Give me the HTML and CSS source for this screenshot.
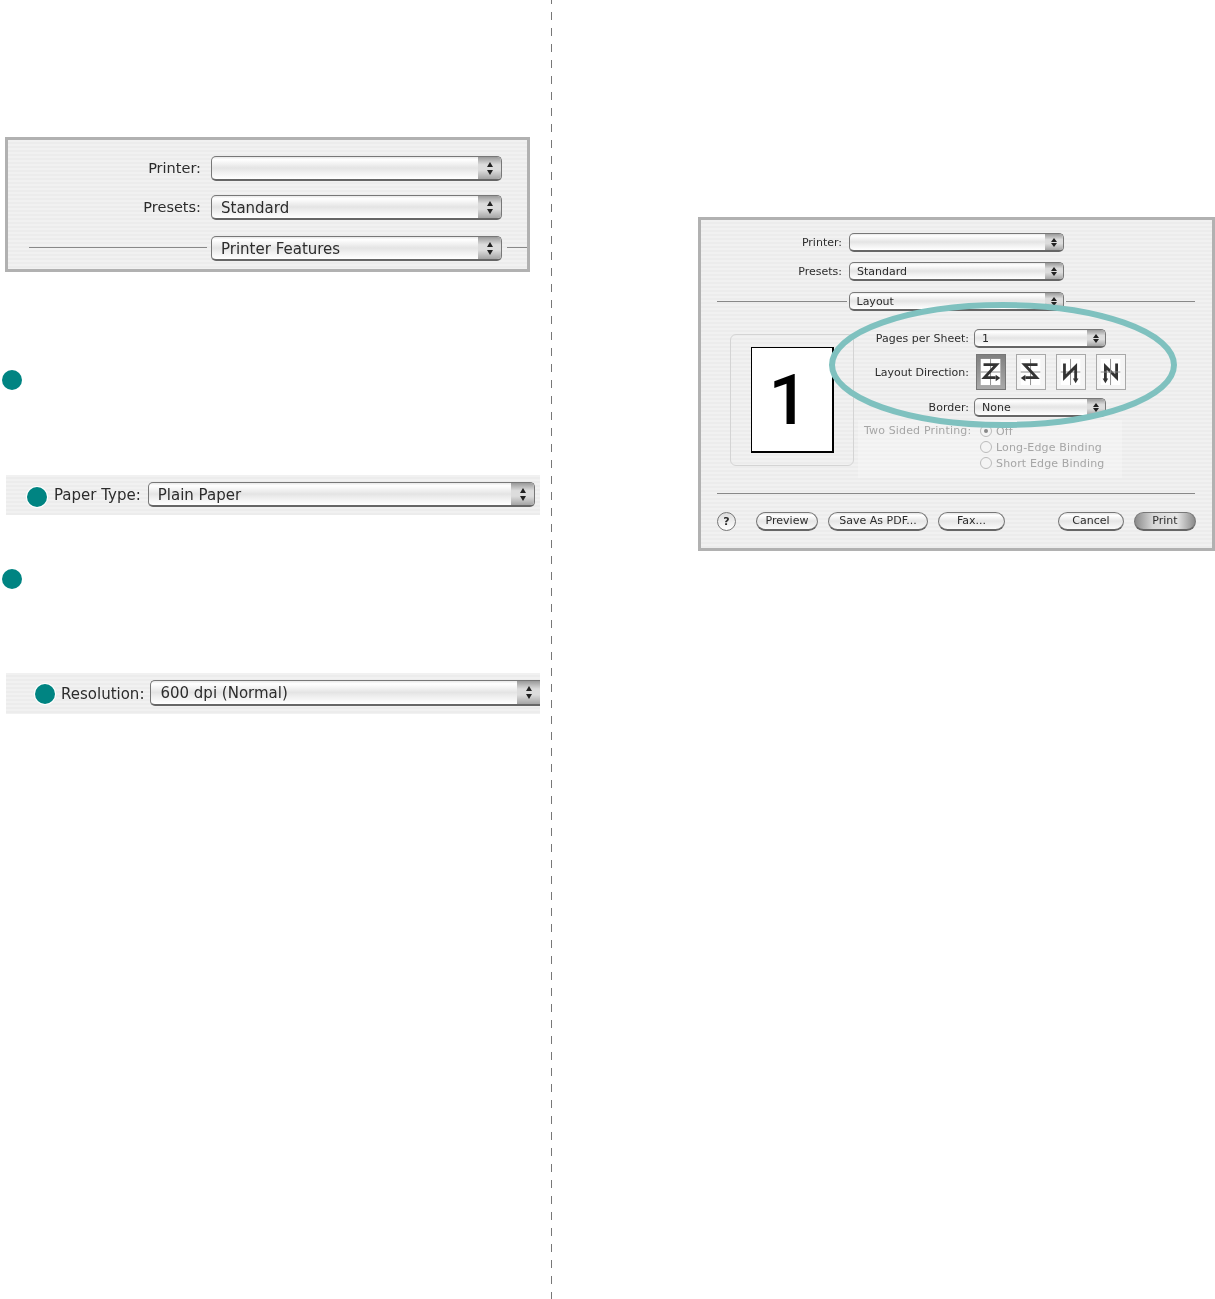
FILE: index.html
```html
<!DOCTYPE html>
<html>

<head>
    <meta charset="utf-8">
    <title>Printer settings</title>
    <link rel="stylesheet" href="styles.css">
</head>

<body>

<div class="page">

    <div class="col_left">
        <div class="panel">
            <div class="panel_row">
                <span class="panel_label">Printer:</span>
                <div class="select big"><span></span><i class="stepper"></i></div>
            </div>
            <div class="panel_row">
                <span class="panel_label">Presets:</span>
                <div class="select big"><span>Standard</span><i class="stepper"></i></div>
            </div>
            <div class="panel_row sep_row">
                <div class="line line_a"></div>
                <div class="select big"><span>Printer Features</span><i class="stepper"></i></div>
                <div class="line line_b"></div>
            </div>
        </div>

        <div class="bullet step_one"></div>

        <div class="strip paper">
            <div class="bullet ringed"></div>
            <span class="strip_label">Paper Type:</span>
            <div class="select big"><span>Plain Paper</span><i class="stepper"></i></div>
        </div>

        <div class="bullet step_two"></div>

        <div class="strip resolution">
            <div class="bullet ringed"></div>
            <span class="strip_label">Resolution:</span>
            <div class="select big"><span>600 dpi (Normal)</span><i class="stepper"></i></div>
        </div>
    </div>

    <div class="col_right">
        <div class="dialog">
            <div class="d_row">
                <span class="d_label">Printer:</span>
                <div class="select small main_sel"><span></span><i class="stepper"></i></div>
            </div>
            <div class="d_row">
                <span class="d_label">Presets:</span>
                <div class="select small main_sel"><span>Standard</span><i class="stepper"></i></div>
            </div>
            <div class="d_row sep">
                <div class="line"></div>
                <div class="select small main_sel"><span>Layout</span><i class="stepper"></i></div>
                <div class="line"></div>
            </div>

            <div class="content">
                <div class="preview">
                    <div class="sheet">1</div>
                </div>
                <div class="options">
                    <div class="opt_row">
                        <span class="opt_label">Pages per Sheet:</span>
                        <div class="select small opt_sel"><span>1</span><i class="stepper"></i></div>
                    </div>
                    <div class="opt_row dir_row">
                        <span class="opt_label">Layout Direction:</span>
                        <div class="dir_btns">
                            <svg class="dir on" viewBox="0 0 30 36" width="30" height="36">
                                <rect x="4" y="4" width="21" height="28" fill="#fff"/>
                                <path d="M14.5 4V32M4 18H25" stroke="#888" stroke-width="1"/>
                                <path d="M7 10H21L8 24H20" fill="none" stroke="#333" stroke-width="3"/>
                                <path d="M20 21L25 24.500L20 28Z" fill="#333"/>
                            </svg>
                            <svg class="dir" viewBox="0 0 30 36" width="30" height="36">
                                <rect x="4" y="4" width="21" height="28" fill="#fff"/>
                                <path d="M14.500 4V32M4 18H25" stroke="#888" stroke-width="1"/>
                                <path d="M22 10H8L21 24H9" fill="none" stroke="#333" stroke-width="3"/>
                                <path d="M9 21L4 24.500L9 28Z" fill="#333"/>
                            </svg>
                            <svg class="dir" viewBox="0 0 30 36" width="30" height="36">
                                <rect x="4" y="4" width="21" height="28" fill="#fff"/>
                                <path d="M14.500 4V32M4 18H25" stroke="#888" stroke-width="1"/>
                                <path d="M8 9V24L20 12V26" fill="none" stroke="#333" stroke-width="3"/>
                                <path d="M17 25L20 30L23 25Z" fill="#333"/>
                            </svg>
                            <svg class="dir" viewBox="0 0 30 36" width="30" height="36">
                                <rect x="4" y="4" width="21" height="28" fill="#fff"/>
                                <path d="M21 9V24L9 12V26" fill="none" stroke="#333" stroke-width="3"/>
                                <path d="M14.500 4V32M4 18H25" stroke="#888" stroke-width="1"/>
                                <path d="M6 25L9 30L12 25Z" fill="#333"/>
                            </svg>
                        </div>
                    </div>
                    <div class="opt_row border_row">
                        <span class="opt_label">Border:</span>
                        <div class="select small opt_sel"><span>None</span><i class="stepper"></i></div>
                    </div>
                    <div class="two_sided">
                        <span class="two_label">Two Sided Printing:</span>
                        <div class="radios">
                            <div class="radio picked"><i></i>Off</div>
                            <div class="radio"><i></i>Long-Edge Binding</div>
                            <div class="radio"><i></i>Short Edge Binding</div>
                        </div>
                    </div>
                </div>
            </div>

            <div class="line wide"></div>

            <div class="footer">
                <div class="help">?</div>
                <div class="btn b_preview">Preview</div>
                <div class="btn b_pdf">Save As PDF...</div>
                <div class="btn b_fax">Fax...</div>
                <div class="btn b_cancel">Cancel</div>
                <div class="btn b_print">Print</div>
            </div>

            <!-- callout ring drawn over the layout options -->
            <svg class="ring" width="356" height="133" viewBox="0 0 356 133">
                <ellipse cx="177" cy="66" rx="171" ry="60" fill="none" stroke="#7fc1bf" stroke-width="6"/>
            </svg>
        </div>
    </div>

</div>

</body>

</html>
```

FILE: styles.css
```css
* {
    margin: 0;
    box-sizing: border-box;
}

body {
    background: #fff;
    font-family: "DejaVu Sans", sans-serif;
    color: #2c2c2c;
}

.page {
    display: flex;
    height: 1299px;
    overflow: hidden;
}

/* long dashes of the page fold */
.col_left {
    width: 552px;
    padding-top: 137px;
    background: linear-gradient(to bottom, #777 0, #777 8px, transparent 8px) right -1px top 12px / 2px 16px repeat-y;
}

.col_right {
    flex: 1;
    padding-top: 217px;
}

/* stripes shared by the dialogs */
.panel, .strip, .dialog {
    background: repeating-linear-gradient(to bottom, #f1f1f1 0, #f1f1f1 2px, #ececec 2px, #ececec 4px);
}

.panel {
    width: 525px;
    height: 135px;
    margin-left: 5px;
    border: 3px solid #b1b1b1;
    padding-top: 16px;
    filter: blur(0.4px);
}

.panel_row {
    display: flex;
    align-items: center;
    margin-bottom: 14px;
}

.panel_label {
    width: 193px;
    margin: -2px 10px 0 0;
    text-align: right;
    font-size: 14.500px;
}

.sep_row {
    margin-top: 16px;
}

.sep_row .line_a {
    flex: none;
    width: 178px;
    margin: -2px 4px 0 21px;
}

.sep_row .line_b {
    flex: none;
    width: 20px;
    margin: -2px 0 0 5px;
}

.panel .select {
    width: 291px;
}

.line {
    height: 1px;
    background: #888;
    flex: 1;
}

/* select control */
.select {
    display: flex;
    justify-content: space-between;
    border: 1px solid #777;
    border-bottom: 2px solid #666;
    border-radius: 5px;
    background: linear-gradient(to bottom, #e8e8e8 0, #fff 12%, #e4e4e4 50%, #f0f0f0 70%, #fff 100%);
    overflow: hidden;
    color: #2c2c2c;
}

.select.big {
    height: 25px;
    font-size: 15px;
    line-height: 24px;
}

.select.big span {
    padding-left: 9px;
}

.select.small {
    height: 19px;
    font-size: 11px;
    line-height: 17px;
}

.select.small span {
    padding-left: 7px;
}

.stepper {
    display: flex;
    flex-direction: column;
    align-items: center;
    justify-content: center;
    gap: 3px;
    width: 23px;
    background: linear-gradient(to bottom, #9a9a9a 0, #dcdcdc 35%, #dcdcdc 60%, #a5a5a5 100%);
}

.small .stepper {
    width: 18px;
    gap: 1px;
}

.stepper::before, .stepper::after {
    content: "";
    border-left: 3px solid transparent;
    border-right: 3px solid transparent;
}

.stepper::before {
    border-bottom: 5px solid #222;
}

.stepper::after {
    border-top: 5px solid #222;
}

.small .stepper::before {
    border-bottom-width: 4px;
}

.small .stepper::after {
    border-top-width: 4px;
}

/* teal bullets */
.bullet {
    width: 20px;
    height: 20px;
    border-radius: 50%;
    background: #008482;
}

.step_one {
    margin: 98px 0 0 2px;
}

.step_two {
    margin: 54px 0 0 2px;
}

.ringed {
    box-shadow: 0 0 0 1px #fff;
}

.strip {
    display: flex;
    align-items: center;
    width: 534px;
    margin-left: 6px;
    filter: blur(0.4px);
}

.paper {
    height: 40px;
    margin-top: 85px;
    padding: 0 5px 0 21px;
}

.paper .bullet {
    margin-top: 4px;
}

.resolution {
    height: 41px;
    margin-top: 84px;
    padding-left: 29px;
}

.strip_label {
    margin: 0 6px 0 7px;
    font-size: 15px;
    white-space: nowrap;
}

.paper .strip_label {
    margin-right: 7px;
}

.resolution .strip_label {
    margin-left: 6px;
}

.strip .select {
    flex: 1;
    margin-top: -1px;
}

.resolution .select {
    height: 26px;
    border-right: none;
    border-radius: 5px 0 0 5px;
}

/* right hand dialog */
.dialog {
    position: relative;
    width: 517px;
    height: 334px;
    margin-left: 146px;
    border: 3px solid #b1b1b1;
    padding: 13px 17px 0 16px;
    filter: blur(0.3px);
}

.d_row {
    display: flex;
    align-items: center;
    margin-bottom: 10px;
}

.d_label {
    width: 125px;
    margin-right: 7px;
    text-align: right;
    font-size: 11px;
}

.main_sel {
    width: 215px;
}

.d_row.sep {
    margin-top: 11px;
    gap: 2px;
}

.d_row.sep .line {
    margin-top: -1px;
}

.content {
    display: flex;
    align-items: flex-start;
    margin-top: 18px;
}

.preview {
    width: 124px;
    height: 132px;
    margin: 5px 0 0 13px;
    padding: 12px 0 0 20px;
    border: 1px solid #d4d4d4;
    border-radius: 6px;
}

.sheet {
    width: 83px;
    height: 106px;
    padding-right: 7px;
    background: #fff;
    border: 1px solid #000;
    border-bottom-width: 2px;
    border-right-width: 2px;
    text-align: center;
    font-family: Roboto, sans-serif;
    font-size: 70px;
    font-weight: 500;
    line-height: 104px;
    color: #000;
}

.opt_row {
    display: flex;
    align-items: center;
    font-size: 11px;
}

.opt_label {
    width: 115px;
    margin-right: 5px;
    text-align: right;
    white-space: nowrap;
}

.opt_sel {
    width: 132px;
}

.dir_row {
    margin-top: 6px;
}

.dir_row .opt_label {
    margin-right: 7px;
}

.dir_btns {
    display: flex;
    gap: 10px;
}

.dir {
    display: block;
    background: #f4f4f4;
    border: 1px solid #a8a8a8;
}

.dir.on {
    background: linear-gradient(to bottom, #808080, #aaa);
    border-color: #777;
}

.border_row {
    margin-top: 8px;
}

.two_sided {
    display: flex;
    align-items: flex-start;
    width: 264px;
    height: 58px;
    margin: 3px 0 0 4px;
    padding-top: 3px;
    background: rgba(255, 255, 255, 0.25);
    font-size: 11px;
    letter-spacing: 0.15px;
    color: #a6a6a6;
}

.two_label {
    width: 113px;
    padding-left: 6px;
    line-height: 16px;
    white-space: nowrap;
}

.radios {
    margin-left: 9px;
}

.radio {
    display: flex;
    align-items: center;
    height: 16px;
    gap: 4px;
}

.radio i {
    position: relative;
    width: 12px;
    height: 12px;
    border: 1px solid #bbb;
    border-radius: 50%;
    background: #f4f4f4;
}

.picked i::after {
    content: "";
    position: absolute;
    top: 3px;
    left: 3px;
    width: 4px;
    height: 4px;
    border-radius: 50%;
    background: #888;
}

.line.wide {
    flex: none;
    margin-top: 15px;
    width: 478px;
}

.footer {
    display: flex;
    align-items: center;
    margin: 18px -1px 0 0;
}

.help {
    width: 19px;
    height: 19px;
    margin-right: 20px;
    border: 1px solid #777;
    border-radius: 50%;
    background: linear-gradient(to bottom, #ddd, #fff);
    text-align: center;
    font-size: 11px;
    font-weight: bold;
    line-height: 17px;
}

.btn {
    height: 19px;
    border: 1px solid #777;
    border-bottom: 2px solid #666;
    border-radius: 10px;
    background: linear-gradient(to bottom, #e4e4e4 0, #fff 15%, #e6e6e6 50%, #fafafa 100%);
    text-align: center;
    font-size: 11px;
    line-height: 16px;
}

.b_preview {
    width: 62px;
    margin-right: 10px;
}

.b_pdf {
    width: 100px;
    margin-right: 10px;
}

.b_fax {
    width: 67px;
    margin-right: auto;
}

.b_cancel {
    width: 66px;
    margin-right: 10px;
}

.b_print {
    width: 62px;
    background: linear-gradient(to right, #8a8a8a 0, #d8d8d8 30%, #e6e6e6 70%, #8a8a8a 100%);
}

.ring {
    position: absolute;
    top: 79px;
    left: 125px;
}
```
